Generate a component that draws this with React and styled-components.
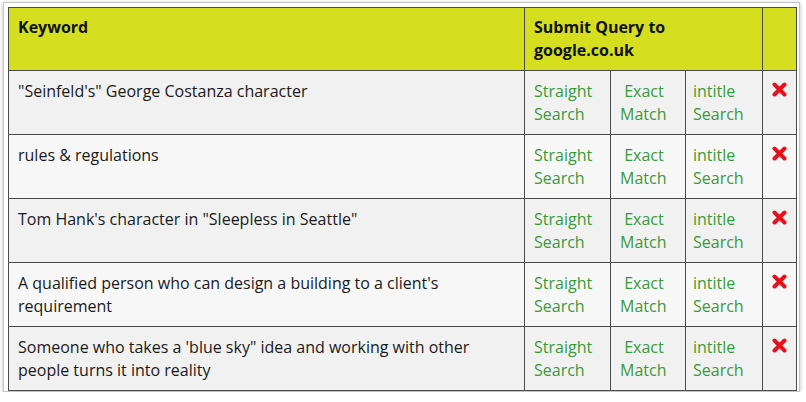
import React from "react";
import styled, { createGlobalStyle } from "styled-components";

const Global = createGlobalStyle`
  html, body { margin: 0; padding: 0; background: #fff; }
  body { font-family: "Open Sans", "Liberation Sans", sans-serif; }
`;

const Frame = styled.div`
  margin: 2px 0 0 3px;
  width: 797px;
  height: 390px;
  box-sizing: border-box;
  border: 1px solid #c4c4c4;
  box-shadow: 0 1px 4px rgba(0, 0, 0, 0.25);
  padding: 4px 4px 0 4px;
  overflow: hidden;
  background: #fff;
`;

const Table = styled.table`
  border-collapse: collapse;
  width: 788px;
  table-layout: fixed;
  font-size: 16px;
  line-height: 23px;
  color: #1a1a1a;
`;

const Head = styled.th`
  background: #d5df20;
  border: 1px solid #4a4a4a;
  text-align: left;
  vertical-align: top;
  font-weight: 700;
  padding: 8px 9px 0;
  height: 54px;
  color: #111;
`;

const Row = styled.tr`
  background: ${(p) => (p.$alt ? "#f7f7f7" : "#f1f1f1")};
`;

const Cell = styled.td`
  border: 1px solid #4a4a4a;
  vertical-align: top;
  padding: 9px 8px 0 ${(p) => p.$pl || 9}px;
  height: 54px;
`;

const Link = styled.a`
  color: #3a9a3a;
  text-decoration: none;
  display: block;
`;

const Remove = styled.svg`
  display: block;
  margin: 2px 0 0 0;
`;

const rows = [
  "\"Seinfeld's\" George Costanza character",
  "rules & regulations",
  "Tom Hank's character in \"Sleepless in Seattle\"",
  "A qualified person who can design a building to a client's requirement",
  "Someone who takes a 'blue sky\" idea and working with other people turns it into reality",
];

function Cross() {
  return (
    <Remove width="15" height="15" viewBox="0 0 15 15">
      <path d="M2.5 2.5 L12.5 12.5 M12.5 2.5 L2.5 12.5" stroke="#e0141a" strokeWidth="4" strokeLinecap="round" />
    </Remove>
  );
}

export default function App() {
  return (
    <>
      <Global />
      <Frame>
        <Table>
          <colgroup>
            <col style={{ width: 516 }} />
            <col style={{ width: 86 }} />
            <col style={{ width: 75 }} />
            <col style={{ width: 77 }} />
            <col style={{ width: 34 }} />
          </colgroup>
          <thead>
            <tr>
              <Head>Keyword</Head>
              <Head colSpan={3}>Submit Query to google.co.uk</Head>
              <Head />
            </tr>
          </thead>
          <tbody>
            {rows.map((r, i) => (
              <Row key={i} $alt={i % 2 === 1}>
                <Cell>{r}</Cell>
                <Cell>
                  <Link href="#">Straight Search</Link>
                </Cell>
                <Cell>
                  <Link href="#">{"\u00a0Exact Match"}</Link>
                </Cell>
                <Cell $pl={7}>
                  <Link href="#">intitle Search</Link>
                </Cell>
                <Cell>
                  <Cross />
                </Cell>
              </Row>
            ))}
          </tbody>
        </Table>
      </Frame>
    </>
  );
}
